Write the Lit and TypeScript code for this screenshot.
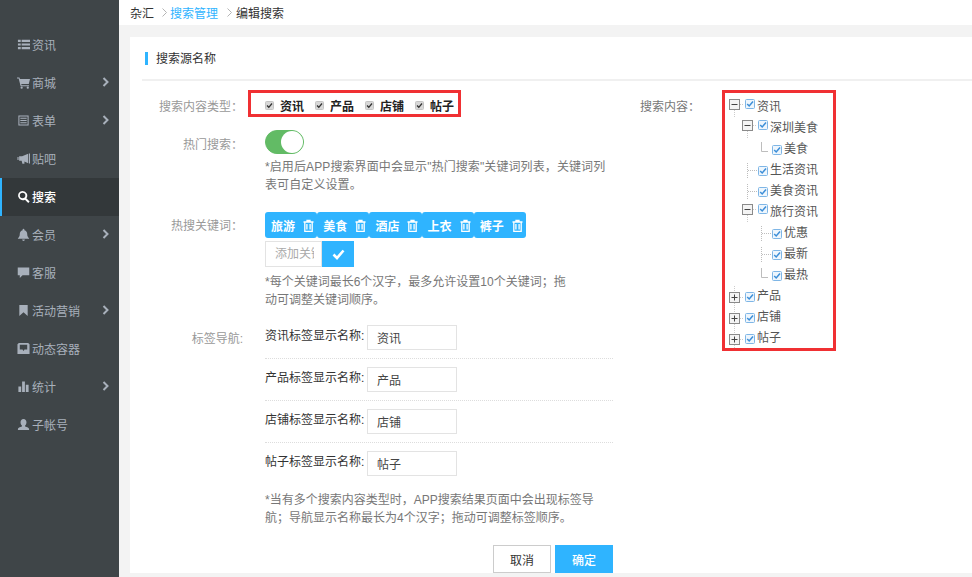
import { LitElement, html, css, svg } from "lit";
import { customElement } from "lit/decorators.js";

const ICONS: Record<string, unknown> = {
  list: svg`<path d="M1 2h3v2.400H1zM5 2h9v2.400H5zM1 5.800h3v2.400H1zM5 5.800h9v2.400H5zM1 9.600h3V12H1zM5 9.600h9V12H5z"/>`,
  cart: svg`<path d="M0 1.500h2.600l.6 1.600H14l-1.300 5.600H4.600l.3 1.200h8v1.200H3.900L1.800 2.700H0z"/><circle cx="5" cy="12.600" r="1.200"/><circle cx="11.600" cy="12.600" r="1.200"/>`,
  form: svg`<path fill-rule="evenodd" d="M1.500 1.500h11v11h-11zM2.600 2.600v8.800h8.800V2.600zM3.600 4h6.800v1.100H3.600zM3.600 6.400h6.800v1.100H3.600zM3.600 8.800h6.800v1.100H3.600z"/>`,
  horn: svg`<path d="M.5 5.500h1.200v3H.5zM2.300 4.600h3.200L12 2v10L8 10.300v2.400H5.800L5 9.400H2.300zM12.800 1.500h1.200v11h-1.200z"/>`,
  search: svg`<path fill-rule="evenodd" d="M6 1a5 5 0 0 1 4 8l3.600 3.500-1.500 1.500L8.600 10.400A5 5 0 1 1 6 1zm0 2a3 3 0 1 0 0 6 3 3 0 0 0 0-6z"/>`,
  bell: svg`<path d="M7 .8c.6 0 1 .4 1 1v.5c2 .5 3 2.100 3 4.200 0 2.400.8 3.500 2 4.500v.7H1v-.7c1.200-1 2-2.100 2-4.500 0-2.100 1-3.700 3-4.200v-.5c0-.6.4-1 1-1zM5.500 12.500h3a1.500 1.500 0 0 1-3 0z"/>`,
  chat: svg`<path d="M.8 1.500h12.400v8.500H6l-3 3v-3H.8z"/>`,
  mark: svg`<path d="M2.500 1h9v12L7 8.800 2.500 13z"/>`,
  inbox: svg`<path fill-rule="evenodd" d="M2 1h10l1.500 1.500V13H.5V2.500zM3 3v5h3l.7 1.500h.6L8 8h3V3z"/>`,
  stats: svg`<path d="M1.500 7h3v6h-3zM5.500 1.500h3V13h-3zM9.500 5h3v8h-3z"/>`,
  user: svg`<path d="M7 1c2 0 3.200 1.500 3.200 3.600 0 1.500-.6 2.800-1.500 3.500v1c2.300.6 4.300 1.400 4.300 2.700V13H1v-1.200c0-1.300 2-2.100 4.300-2.700v-1c-.9-.7-1.500-2-1.500-3.500C3.800 2.500 5 1 7 1z"/>`,
};

const NAV: { icon: string; label: string; arrow?: boolean; active?: boolean }[] = [
  { icon: "list", label: "资讯" },
  { icon: "cart", label: "商城", arrow: true },
  { icon: "form", label: "表单", arrow: true },
  { icon: "horn", label: "贴吧" },
  { icon: "search", label: "搜索", active: true },
  { icon: "bell", label: "会员", arrow: true },
  { icon: "chat", label: "客服" },
  { icon: "mark", label: "活动营销", arrow: true },
  { icon: "inbox", label: "动态容器" },
  { icon: "stats", label: "统计", arrow: true },
  { icon: "user", label: "子帐号" },
];

const TYPES = ["资讯", "产品", "店铺", "帖子"];
const TAGS = ["旅游", "美食", "酒店", "上衣", "裤子"];

const TREE: { level: number; kind: string; label: string }[] = [
  { level: 0, kind: "minus", label: "资讯" },
  { level: 1, kind: "minus", label: "深圳美食" },
  { level: 2, kind: "corner", label: "美食" },
  { level: 1, kind: "tee", label: "生活资讯" },
  { level: 1, kind: "tee", label: "美食资讯" },
  { level: 1, kind: "minus", label: "旅行资讯" },
  { level: 2, kind: "tee", label: "优惠" },
  { level: 2, kind: "tee", label: "最新" },
  { level: 2, kind: "corner", label: "最热" },
  { level: 0, kind: "plus", label: "产品" },
  { level: 0, kind: "plus", label: "店铺" },
  { level: 0, kind: "plus", label: "帖子" },
];

function connector(kind: string) {
  const dotted = "#bdbdbd";
  if (kind === "tee")
    return html`<svg class="conn" width="16" height="21" viewBox="0 0 16 21">
      <path d="M5.500 4V20M6 11.500H15" stroke=${dotted} stroke-dasharray="1 1" fill="none" />
    </svg>`;
  if (kind === "corner")
    return html`<svg class="conn" width="16" height="21" viewBox="0 0 16 21">
      <path d="M5.500 4V13.500H12" stroke=${dotted} fill="none" />
    </svg>`;
  const y = kind === "plus" ? 7 : 3;
  return html`<svg class="conn" width="16" height="21" viewBox="0 0 16 21">
    ${kind === "minus"
      ? svg`<path d="M5.500 14V21" stroke="#ccc" stroke-dasharray="1 1" fill="none" />`
      : svg`<path d="M5.500 1V6M5.500 18V21" stroke="#ccc" stroke-dasharray="1 1" fill="none" />`}
    <path d="M11 ${y + 5.5}H15" stroke="#ccc" stroke-dasharray="1 1" fill="none" />
    <rect x=".5" y=${y + 0.5} width="10" height="10" fill="#f4f4f4" stroke="#8a8a8a" />
    <path
      d=${kind === "plus"
        ? `M2.500 ${y + 5.5}H8.500M5.500 ${y + 2.5}V${y + 8.5}`
        : `M2.500 ${y + 5.5}H8.500`}
      stroke="#444"
      fill="none"
    />
  </svg>`;
}

@customElement("app-root")
export class AppRoot extends LitElement {
  static styles = css`
    :host {
      display: block;
      width: 972px;
      height: 577px;
      overflow: hidden;
      font-family: "Liberation Sans", "Noto Sans CJK SC", sans-serif;
      font-size: 12px;
      color: #333;
      background: #f3f3f3;
    }
    * { box-sizing: border-box; }
    .page { display: flex; height: 577px; }
    .side {
      width: 119px;
      flex: none;
      background: #3f4548;
      padding-top: 26px;
      color: #a8b0bb;
    }
    .nav {
      height: 38px;
      display: flex;
      align-items: center;
      padding-left: 17px;
      position: relative;
      gap: 2px;
    }
    .nav span { margin-bottom: 2px; }
    .nav svg.ic { width: 13px; height: 13px; fill: #a8b0bb; flex: none; margin-bottom: 2px; }
    .nav.active { background: #33383a; color: #fff; font-weight: 500; box-shadow: inset 2px 0 0 #2fb4ff; }
    .nav.active svg.ic { fill: #fff; }
    .nav .arrow { position: absolute; left: 102px; top: 13px; width: 7px; height: 10px; fill: none; stroke: #a8b0bb; stroke-width: 2; }

    .main { flex: 1; min-width: 0; display: flex; flex-direction: column; }
    .crumb {
      height: 25px;
      flex: none;
      background: #fff;
      padding-left: 11px;
      display: flex;
      align-items: center;
      color: #333;
    }
    .crumb .link { color: #2fb4ff; }
    .crumb svg { width: 5px; height: 9px; margin: 0 3px 0 8px; fill: none; stroke: #b5b5b5; }
    .crumb svg.wide { margin: 0 4px 0 9px; }
    .card {
      margin: 12px 0 0 11px;
      height: 536px;
      flex: none;
      background: #fff;
      padding: 0 0 0 12px;
    }
    .title {
      height: 44px;
      border-bottom: 2px solid #f0f0f0;
      display: flex;
      align-items: center;
      padding: 0 0 0 3px;
      gap: 8px;
      color: #333;
    }
    .title i { width: 3px; height: 13px; background: #2fb4ff; }
    .title span { margin-bottom: 2px; }
    .cols { display: flex; padding-top: 9px; }
    .left { width: 471px; flex: none; }
    .row { display: flex; }
    .lab { width: 101px; flex: none; text-align: right; color: #999; line-height: 18px; }
    .val { margin-left: 22px; width: 348px; flex: none; }
    .redline { border: 3px solid #f03033; }
    .types {
      width: 213px;
      height: 27px;
      display: flex;
      align-items: center;
      padding-left: 14px;
      font-weight: 700;
      color: #222;
    }
    .type { width: 50px; display: flex; align-items: center; gap: 6px; flex: none; }
    .type svg { width: 9px; height: 9px; flex: none; margin-top: 4px; }
    .type span { margin-top: 3px; }
    .r1 .lab { padding-top: 8px; width: 101px; margin-right: 5px; }
    .r2 { margin-top: 13px; }
    .r2 .lab { padding-top: 6px; }
    .toggle {
      width: 39px;
      height: 24px;
      border-radius: 12px;
      background: #62bb65;
      border: 1px solid #62bb65;
      display: flex;
      justify-content: flex-end;
    }
    .toggle b { width: 22px; height: 22px; border-radius: 50%; background: #fff; }
    .help { color: #777; line-height: 18px; }
    .r2 .help { margin-top: 4px; letter-spacing: .1px; }
    .r3 { margin-top: 18px; }
    .r3 .lab { padding-top: 5px; }
    .tags { display: flex; }
    .tag {
      width: 52.200px;
      height: 26px;
      background: #2fb4ff;
      border-radius: 3px;
      color: #fff;
      font-weight: 700;
      display: flex;
      align-items: center;
      padding-left: 6px;
      gap: 8px;
    }
    .tag svg { width: 11px; height: 13px; fill: none; stroke: #fff; stroke-width: 1.300; flex: none; }
    .add { display: flex; margin-top: 3px; }
    .add input {
      width: 57px;
      height: 26px;
      border: 1px solid #e3e3e3;
      padding: 0 7px 0 9px;
      font: inherit;
      outline: none;
      background: #fff;
    }
    .add input::placeholder { color: #aaa; }
    .add button {
      width: 32px;
      height: 26px;
      border: 0;
      background: #2fb4ff;
      display: flex;
      align-items: center;
      justify-content: center;
      padding: 0;
    }
    .add svg { width: 13px; height: 11px; fill: none; stroke: #fff; stroke-width: 2.600; }
    .wide-help { margin-top: 7px; width: 310px; line-height: 17.500px; }
    .r4 { margin-top: 16px; }
    .r4 .lab { padding-top: 5px; color: #999; }
    .nrow { display: flex; align-items: flex-start; height: 34px; margin-bottom: 8px; border-bottom: 1px dotted #ddd; }
    .nrow.last { border: 0; height: 40px; margin-bottom: 0; }
    .nrow span { width: 102px; flex: none; line-height: 23px; }
    .nrow input {
      width: 90px;
      height: 25px;
      border: 1px solid #e3e3e3;
      padding: 0 9px;
      font: inherit;
      color: #444;
      outline: none;
    }
    .btns { display: flex; justify-content: flex-end; gap: 4px; margin-top: 18px; }
    .btn {
      width: 58px;
      height: 28px;
      font: inherit;
      border: 1px solid #ccc;
      background: #fff;
      color: #333;
      padding: 0;
    }
    .btn.ok { background: #2fb4ff; border-color: #2fb4ff; color: #fff; font-weight: 500; }

    .right { display: flex; margin-left: 27px; }
    .right .rl { width: 82px; flex: none; color: #777; padding-top: 8px; line-height: 18px; }
    .tree { width: 114px; height: 261px; padding: 3px 0 0 4px; }
    .tr { height: 21px; display: flex; align-items: flex-start; color: #555; }
    .tr.l1 { padding-left: 13px; }
    .tr.l2 { padding-left: 27px; }
    .tr .conn { flex: none; }
    .tr .cb { width: 10px; height: 10px; margin-top: 7px; flex: none; }
    .tr.minus .cb { margin-top: 3px; }
    .tr .txt { margin-left: 2px; line-height: 23px; }
  `;

  render() {
    const chevron = html`<svg class="arrow" viewBox="0 0 7 10"><path d="M1.500 1l4 4-4 4" /></svg>`;
    const crumbArrow = (cls = "") =>
      html`<svg class=${cls} viewBox="0 0 5 9"><path d="M.5.5l4 4-4 4" /></svg>`;
    const greyCheck = html`<svg viewBox="0 0 9 9">
      <rect x=".5" y=".5" width="8" height="8" rx="1" fill="#d8d8d8" stroke="#c4c4c4" />
      <path d="M2 4.500l1.800 1.800L7 2.500" stroke="#333" stroke-width="1.300" fill="none" />
    </svg>`;
    const blueCheck = html`<svg class="cb" viewBox="0 0 10 10">
      <rect x=".5" y=".5" width="9" height="9" rx="1" fill="#eef6fd" stroke="#7fb6e6" />
      <path d="M2.200 5l2 2L8 2.500" stroke="#3d8fd8" stroke-width="1.500" fill="none" />
    </svg>`;
    const trash = html`<svg viewBox="0 0 11 13">
      <path d="M.5 3h10M4 3V1.500h3V3M1.800 3v9.300h7.400V3M3.900 5v5.500M7.100 5v5.500" />
    </svg>`;
    return html`
      <div class="page">
        <aside class="side">
          ${NAV.map(
            (n) => html`<div class="nav ${n.active ? "active" : ""}">
              <svg class="ic" viewBox="0 0 14 14">${ICONS[n.icon]}</svg>
              <span>${n.label}</span>
              ${n.arrow ? chevron : ""}
            </div>`
          )}
        </aside>
        <div class="main">
          <div class="crumb">
            <span>杂汇</span>${crumbArrow()}
            <span class="link">搜索管理</span>${crumbArrow("wide")}
            <span>编辑搜索</span>
          </div>
          <div class="card">
            <div class="title"><i></i><span>搜索源名称</span></div>
            <div class="cols">
              <div class="left">
                <div class="row r1">
                  <div class="lab">搜索内容类型：</div>
                  <div class="types redline">
                    ${TYPES.map((t) => html`<div class="type">${greyCheck}<span>${t}</span></div>`)}
                  </div>
                </div>
                <div class="row r2">
                  <div class="lab">热门搜索：</div>
                  <div class="val">
                    <div class="toggle"><b></b></div>
                    <div class="help">*启用后APP搜索界面中会显示"热门搜索"关键词列表，关键词列表可自定义设置。</div>
                  </div>
                </div>
                <div class="row r3">
                  <div class="lab">热搜关键词：</div>
                  <div class="val">
                    <div class="tags">
                      ${TAGS.map((t) => html`<div class="tag"><span>${t}</span>${trash}</div>`)}
                    </div>
                    <div class="add">
                      <input placeholder="添加关键词" />
                      <button aria-label="确认">
                        <svg viewBox="0 0 13 11"><path d="M1.500 5.500l3.500 3.500L11.500 1.500" /></svg>
                      </button>
                    </div>
                    <div class="help wide-help">*每个关键词最长6个汉字，最多允许设置10个关键词；拖动可调整关键词顺序。</div>
                  </div>
                </div>
                <div class="row r4">
                  <div class="lab">标签导航:</div>
                  <div class="val">
                    ${TYPES.map(
                      (t, i) => html`<div class="nrow ${i === TYPES.length - 1 ? "last" : ""}">
                        <span>${t}标签显示名称:</span><input .value=${t} />
                      </div>`
                    )}
                    <div class="help">*当有多个搜索内容类型时，APP搜索结果页面中会出现标签导航；导航显示名称最长为4个汉字；拖动可调整标签顺序。</div>
                    <div class="btns">
                      <button class="btn">取消</button>
                      <button class="btn ok">确定</button>
                    </div>
                  </div>
                </div>
              </div>
              <div class="right">
                <div class="rl">搜索内容：</div>
                <div class="tree redline">
                  ${TREE.map(
                    (r) => html`<div class="tr l${r.level} ${r.kind}">
                      ${connector(r.kind)}${blueCheck}<span class="txt">${r.label}</span>
                    </div>`
                  )}
                </div>
              </div>
            </div>
          </div>
        </div>
      </div>
    `;
  }
}
